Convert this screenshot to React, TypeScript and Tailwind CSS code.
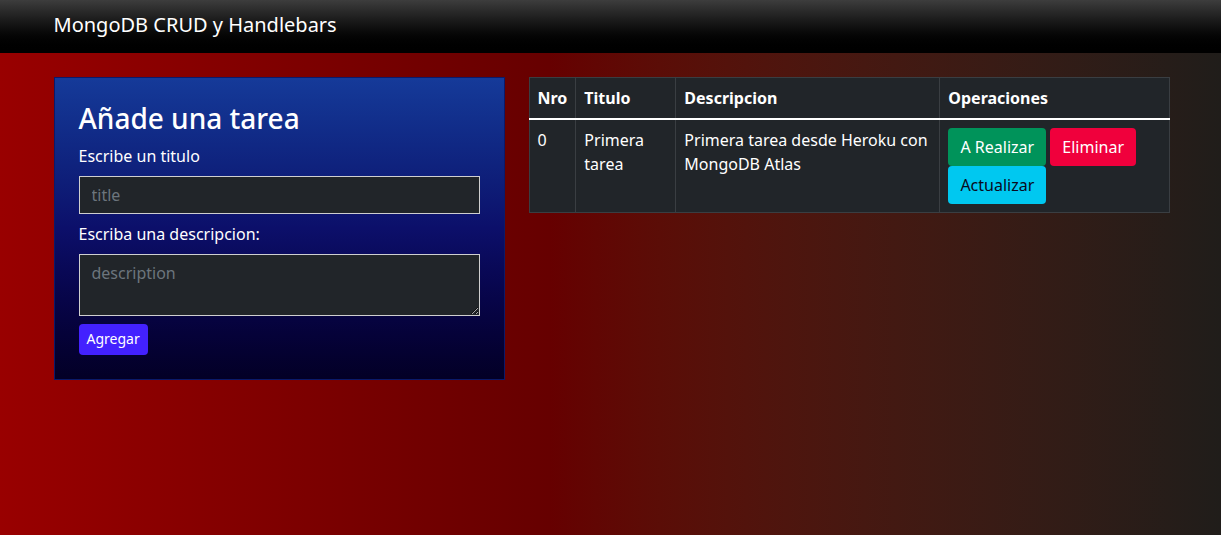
const tasks = [
  { nro: 0, title: 'Primera tarea', description: 'Primera tarea desde Heroku con MongoDB Atlas' },
]

const App = () => {
  return (
    <div
      className="min-h-[535px] bg-linear-to-r from-[#990000] via-[#660000] via-45% to-[#201d1a] text-white"
      style={{ fontFamily: '"Noto Sans", "Open Sans", sans-serif' }}
    >
      {/* Navbar */}
      <nav className="h-[53px] bg-linear-to-b from-[#3d3d3d] to-[#000000]">
        <div className="mx-auto flex h-full w-[1116px] items-center pb-[3px]">
          <span className="pl-[1px] text-[20px] text-white">MongoDB CRUD y Handlebars</span>
        </div>
      </nav>

      <div className="mx-auto mt-6 grid w-[1116px] grid-cols-[451px_641px] gap-6 pl-[1px]">
        {/* Form card */}
        <div className="self-start border border-[#0b1a6a] bg-linear-to-b from-[#153a99] via-[#0c0f6a] via-50% to-[#030026] p-6">
          <h3 className="mb-2 text-[28px] font-medium leading-[1.2]">Añade una tarea</h3>
          <form>
            <label className="mb-2 block text-base leading-6">Escribe un titulo</label>
            <input
              type="text"
              placeholder="title"
              className="block h-[38px] w-full border border-[#cfcfcf] bg-[#212529] px-3 text-base text-white placeholder:text-[#6c757d] focus:outline-none"
            />
            <label className="mb-2 mt-2 block text-base leading-6">Escriba una descripcion:</label>
            <textarea
              rows={2}
              placeholder="description"
              className="block h-[62px] w-full border border-[#cfcfcf] bg-[#212529] px-3 py-[6px] text-base leading-6 text-white placeholder:text-[#6c757d] focus:outline-none"
            />
            <button
              type="button"
              className="mt-2 h-[31px] rounded bg-[#4321ff] px-2 text-sm text-white"
            >
              Agregar
            </button>
          </form>
        </div>

        {/* Tasks table */}
        <div className="self-start">
          <table className="w-full border-collapse border border-[#3a3e42] bg-[#212529] text-left text-base leading-6 text-white">
            <thead>
              <tr className="border-b-2 border-white">
                <th className="w-[45px] border border-[#3a3e42] border-b-white p-2 font-bold">Nro</th>
                <th className="w-[100px] border border-[#3a3e42] border-b-white p-2 font-bold">Titulo</th>
                <th className="w-[264px] border border-[#3a3e42] border-b-white p-2 font-bold">Descripcion</th>
                <th className="border border-[#3a3e42] border-b-white p-2 font-bold">Operaciones</th>
              </tr>
            </thead>
            <tbody>
              {tasks.map((t) => (
                <tr key={t.nro}>
                  <td className="border border-[#3a3e42] p-2 align-top">{t.nro}</td>
                  <td className="border border-[#3a3e42] p-2 align-top">{t.title}</td>
                  <td className="border border-[#3a3e42] p-2 align-top">{t.description}</td>
                  <td className="border border-[#3a3e42] p-2 align-top">
                    <div className="flex w-[196px] flex-wrap gap-x-1">
                      <button className="h-[38px] w-[98px] rounded bg-[#00935a] px-3 text-white">A Realizar</button>
                      <button className="h-[38px] rounded bg-[#f0003c] px-3 text-white">Eliminar</button>
                      <button className="h-[38px] w-[98px] rounded bg-[#00c8f0] px-3 text-[#0a0a20]">Actualizar</button>
                    </div>
                  </td>
                </tr>
              ))}
            </tbody>
          </table>
        </div>
      </div>
    </div>
  )
}

export default App
